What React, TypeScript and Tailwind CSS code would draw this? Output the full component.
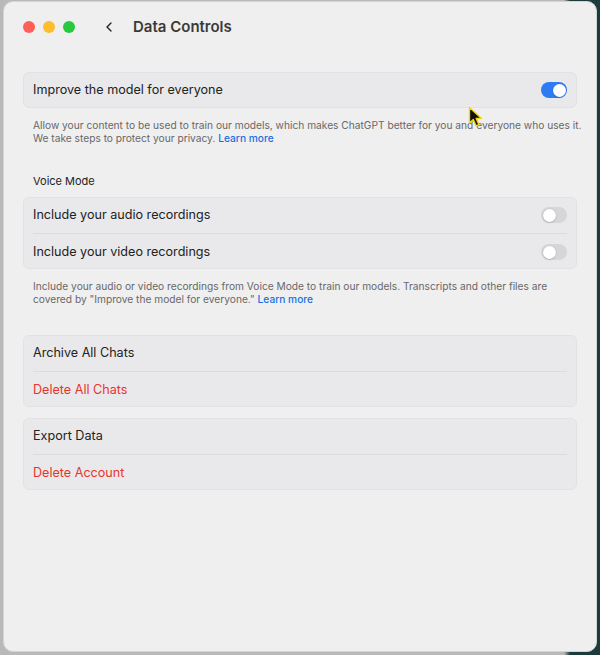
import { ChevronLeft } from "lucide-react"

function Toggle({ on }: { on: boolean }) {
  return (
    <div
      className={`w-[26px] h-[16px] rounded-full p-[1.5px] flex ${on ? "bg-[#2e7bf6] justify-end" : "bg-[#d6d6d8] justify-start"}`}
    >
      <div className="w-[13px] h-[13px] rounded-full bg-white shadow-[0_0.5px_1.5px_rgba(0,0,0,0.3)]" />
    </div>
  )
}

function Row({ label, red, toggle, divider, h = "h-[34px] pt-[3px]" }: { label: string; red?: boolean; toggle?: boolean; divider?: boolean; h?: string }) {
  return (
    <div className={`ml-[9px] mr-[9px] ${divider ? "h-[36px] border-b border-[#dcdcde]" : h} flex items-center justify-between`}>
      <span className={`text-[12.6px] ${red ? "text-[#e8352c]" : "text-[#222]"}`}>{label}</span>
      {toggle !== undefined && <Toggle on={toggle} />}
    </div>
  )
}

function Card({ children }: { children: React.ReactNode }) {
  return <div className="rounded-[6px] bg-[#e9e9eb] border border-[#e2e2e4]">{children}</div>
}

function Cursor() {
  return (
    <svg className="absolute left-[468px] top-[106px]" width="16" height="22" viewBox="0 0 16 22">
      <path d="M1.5 1.5 L1.5 17 L5.3 13.4 L8 19.8 L10.8 18.6 L8.2 12.4 L13.5 12.4 Z" fill="#111" stroke="#f5d410" strokeWidth="1.4" strokeLinejoin="round" />
    </svg>
  )
}

export default function App() {
  return (
    <div
      className="relative w-[600px] h-[655px] bg-[linear-gradient(90deg,#b9b9b9_0%,#b9b9b9_94%,#1d3b3b_95%,#1d3b3b_100%)] pt-[1px] pl-[3px] pr-[3px] pb-[3px]"
      style={{ fontFamily: "Inter, 'Liberation Sans', sans-serif" }}
    >
      <div className="h-full rounded-[10px] bg-[#efefef] border border-[#d4d4d4] flex flex-col">
        <div className="h-[50px] flex items-center pl-[19px]">
          <div className="flex gap-[8px]">
            <div className="w-[12px] h-[12px] rounded-full bg-[#fe5f57]" />
            <div className="w-[12px] h-[12px] rounded-full bg-[#febc2e]" />
            <div className="w-[12px] h-[12px] rounded-full bg-[#28c840]" />
          </div>
          <ChevronLeft className="ml-[26px] text-[#222]" size={16} strokeWidth={2} />
          <span className="ml-[16px] text-[15px] font-semibold text-[#3a3a3a]">Data Controls</span>
        </div>

        <div className="px-[19px] pt-[20px] flex flex-col">
          <Card>
            <Row label="Improve the model for everyone" toggle={true} h="h-[34px]" />
          </Card>
          <p className="pl-[10px] mt-[11px] text-[10.2px] leading-[13px] text-[#686868] whitespace-nowrap">
            Allow your content to be used to train our models, which makes ChatGPT better for you and everyone who uses it.
            <br />
            We take steps to protect your privacy. <span className="text-[#1a6fe0] font-medium">Learn more</span>
          </p>

          <div className="px-[10px] mt-[28px] mb-[7px] text-[11px] text-[#222]">Voice Mode</div>
          <Card>
            <Row label="Include your audio recordings" toggle={false} divider />
            <Row label="Include your video recordings" toggle={false} />
          </Card>
          <p className="pl-[10px] mt-[11px] text-[10.2px] leading-[13px] text-[#686868] whitespace-nowrap">
            Include your audio or video recordings from Voice Mode to train our models. Transcripts and other files are
            <br />
            covered by "Improve the model for everyone." <span className="text-[#1a6fe0] font-medium">Learn more</span>
          </p>

          <div className="mt-[29px] flex flex-col gap-[11px]">
            <Card>
              <Row label="Archive All Chats" divider />
              <Row label="Delete All Chats" red />
            </Card>
            <Card>
              <Row label="Export Data" divider />
              <Row label="Delete Account" red />
            </Card>
          </div>
        </div>
      </div>
      <Cursor />
    </div>
  )
}
